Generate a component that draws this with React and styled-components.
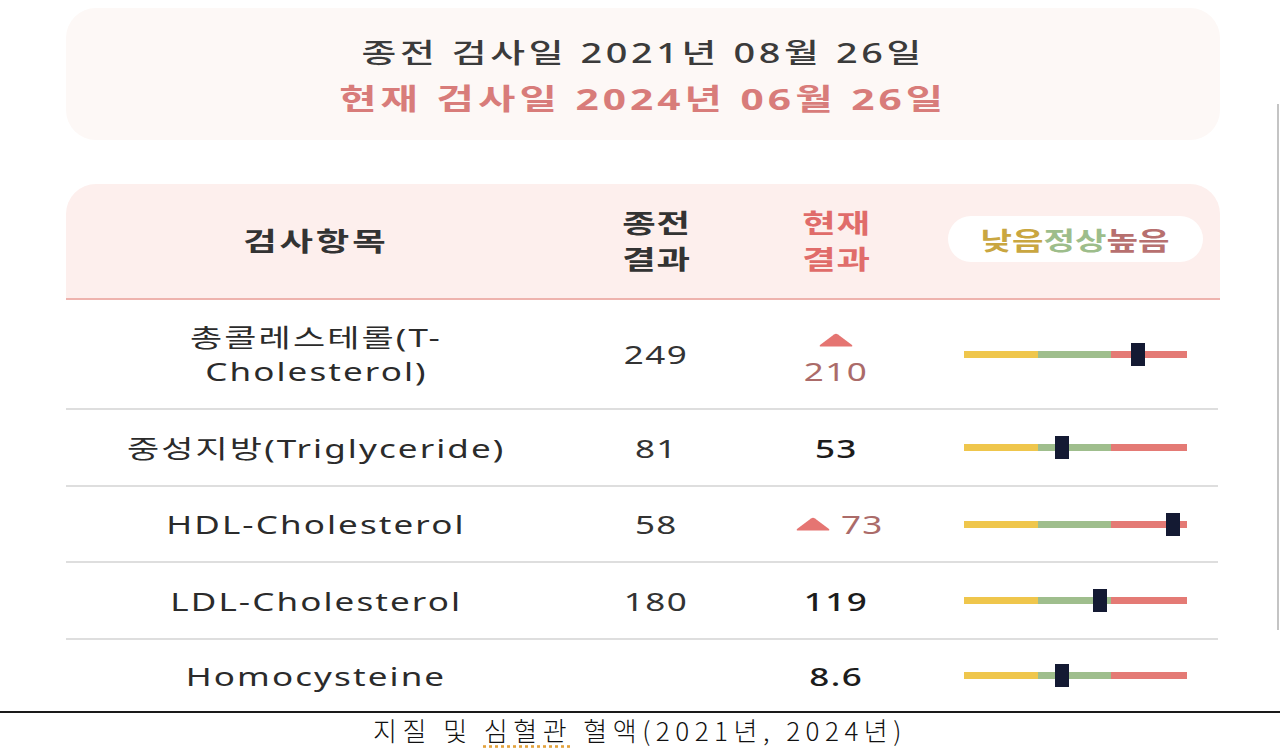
import styled, { createGlobalStyle } from "styled-components";

const GlobalStyle = createGlobalStyle`
  html, body {
    margin: 0;
    padding: 0;
    background: #fff;
  }
  body {
    font-family: "Noto Sans", "Noto Sans CJK KR", sans-serif;
    color: #333;
  }
  *, *::before, *::after {
    box-sizing: border-box;
  }
`;

const Page = styled.div`
  position: relative;
  width: 1280px;
  height: 748px;
  overflow: hidden;
  padding-top: 8px;
  display: flex;
  flex-direction: column;
  & > * {
    flex-shrink: 0;
  }
`;

const ScrollBar = styled.div`
  position: absolute;
  right: 1px;
  top: 104px;
  width: 2px;
  height: 526px;
  background: #c4c4c4;
`;

// the screenshot is stretched sideways, so text gets a horizontal scale
const Wide = styled.span`
  display: inline-block;
  white-space: nowrap;
  transform: scaleX(${(p) => p.$sx || 1.4});
  transform-origin: center;
`;

const DateCard = styled.div`
  margin: 0 60px 0 66px;
  height: 132px;
  padding-top: 22px;
  border-radius: 30px;
  background: #fdf8f6;
  display: flex;
  flex-direction: column;
  align-items: center;
`;

const DateLine = styled.div`
  font-size: ${(p) => (p.$now ? "29px" : "27px")};
  font-weight: ${(p) => (p.$now ? 700 : 500)};
  color: ${(p) => (p.$now ? "#d87c7a" : "#3b3b3b")};
  letter-spacing: ${(p) => (p.$now ? "2.9px" : "2.6px")};
  line-height: 46px;
`;

const Table = styled.div`
  margin: 44px 60px 0 66px;
  display: flex;
  flex-direction: column;
`;

const Cols = `
  display: grid;
  grid-template-columns: 500px 180px 180px 1fr;
  align-items: center;
`;

const HeadRow = styled.div`
  ${Cols}
  height: 116px;
  background: #fdefed;
  border-radius: 30px 30px 0 0;
  border-bottom: 2px solid #eeb3ae;
`;

const HeadCell = styled.div`
  text-align: center;
  font-size: 26px;
  font-weight: 700;
  line-height: 36px;
  letter-spacing: ${(p) => (p.$wide ? "2px" : "0.5px")};
  color: ${(p) => (p.$now ? "#e06c6a" : "#333")};
`;

const Legend = styled.div`
  justify-self: center;
  margin-left: 4px;
  margin-top: -4px;
  width: 255px;
  height: 46px;
  border-radius: 23px;
  background: #fff;
  display: flex;
  align-items: center;
  justify-content: center;
  font-size: 25px;
  font-weight: 700;
`;

const LegendWord = styled.span`
  color: ${(p) => p.$color};
`;

const Row = styled.div`
  ${Cols}
  height: ${(p) => p.$h}px;
  border-bottom: ${(p) => (p.$last ? "none" : "2px solid #dedede")};
  margin-right: 2px;
`;

const ItemCell = styled.div`
  text-align: center;
  font-size: 25px;
  line-height: 34px;
  letter-spacing: 1.5px;
  color: #2b2b2b;
`;

const ValueCell = styled.div`
  display: flex;
  flex-direction: ${(p) => (p.$stack ? "column" : "row")};
  align-items: center;
  justify-content: center;
  gap: ${(p) => (p.$stack ? "8px" : "16px")};
  padding-top: ${(p) => (p.$stack ? "12px" : "0")};
  font-size: 25px;
  letter-spacing: 1px;
  line-height: 32px;
  font-weight: ${(p) => (p.$strong ? 500 : 400)};
  color: ${(p) => (p.$up ? "#ab6b69" : p.$strong ? "#1c1c1c" : "#333")};
`;

const UpMark = styled.svg`
  display: block;
  width: 36px;
  height: 14px;
`;

const GaugeCell = styled.div`
  display: flex;
  justify-content: center;
  padding-left: 6px;
`;

const Gauge = styled.div`
  position: relative;
  width: 223px;
  height: 7px;
  display: flex;
`;

const Segment = styled.div`
  flex: ${(p) => p.$w} 0 0;
  background: ${(p) => p.$color};
`;

const Marker = styled.div`
  position: absolute;
  top: 50%;
  left: ${(p) => p.$pos}px;
  width: 14px;
  height: 23px;
  margin-left: -7px;
  margin-top: -11.5px;
  background: #141a33;
`;

const Caption = styled.div`
  margin-top: auto;
  border-top: 2px solid #1a1a1a;
  height: 37px;
  padding-top: 1px;
  text-align: center;
  font-family: "Noto Sans CJK KR", sans-serif;
  font-size: 26px;
  font-weight: 300;
  letter-spacing: 5.5px;
  line-height: 32px;
  color: #111;
`;

const Squiggle = styled.span`
  text-decoration: underline dotted #e3a23c;
  text-underline-offset: 4px;
`;

const rows = [
  {
    name: ["총콜레스테롤(T-", "Cholesterol)"],
    prev: "249",
    now: "210",
    up: "stack",
    pos: 174,
    h: 110,
  },
  { name: ["중성지방(Triglyceride)"], prev: "81", now: "53", pos: 98, h: 77 },
  {
    name: ["HDL-Cholesterol"],
    prev: "58",
    now: "73",
    up: "side",
    pos: 209,
    h: 76,
  },
  { name: ["LDL-Cholesterol"], prev: "180", now: "119", pos: 136, h: 77 },
  { name: ["Homocysteine"], prev: "", now: "8.6", pos: 98, h: 71, last: true },
];

const Up = () => (
  <UpMark viewBox="0 0 36 14">
    <path
      d="M16 1.5 Q18 0 20 1.5 L34 12 Q35 13.5 33 13.5 L3 13.5 Q1 13.5 2 12 Z"
      fill="#e57572"
    />
  </UpMark>
);

const App = () => {
  return (
    <Page>
      <GlobalStyle />
      <DateCard>
        <DateLine>
          <Wide>종전 검사일 2021년 08월 26일</Wide>
        </DateLine>
        <DateLine $now>
          <Wide>현재 검사일 2024년 06월 26일</Wide>
        </DateLine>
      </DateCard>

      <Table>
        <HeadRow>
          <HeadCell $wide>
            <Wide>검사항목</Wide>
          </HeadCell>
          <HeadCell>
            <Wide>
              종전
              <br />
              결과
            </Wide>
          </HeadCell>
          <HeadCell $now>
            <Wide>
              현재
              <br />
              결과
            </Wide>
          </HeadCell>
          <Legend>
            <Wide $sx={1.37}>
              <LegendWord $color="#c9a640">낮음</LegendWord>
              <LegendWord $color="#9dbd8b">정상</LegendWord>
              <LegendWord $color="#b7706f">높음</LegendWord>
            </Wide>
          </Legend>
        </HeadRow>

        {rows.map((r) => (
          <Row key={r.name[0]} $h={r.h} $last={r.last}>
            <ItemCell>
              {r.name.map((line, i) => (
                <div key={i}>
                  <Wide>{line}</Wide>
                </div>
              ))}
            </ItemCell>
            <ValueCell>
              <Wide>{r.prev}</Wide>
            </ValueCell>
            <ValueCell $stack={r.up === "stack"} $up={!!r.up} $strong={!r.up}>
              {r.up && <Up />}
              <Wide>{r.now}</Wide>
            </ValueCell>
            <GaugeCell>
              <Gauge>
                <Segment $w={74} $color="#efc64c" />
                <Segment $w={73} $color="#9fbe8d" />
                <Segment $w={76} $color="#e47a75" />
                <Marker $pos={r.pos} />
              </Gauge>
            </GaugeCell>
          </Row>
        ))}
      </Table>

      <Caption>
        지질 및 <Squiggle>심혈관</Squiggle> 혈액(2021년, 2024년)
      </Caption>
      <ScrollBar />
    </Page>
  );
};

export default App;
